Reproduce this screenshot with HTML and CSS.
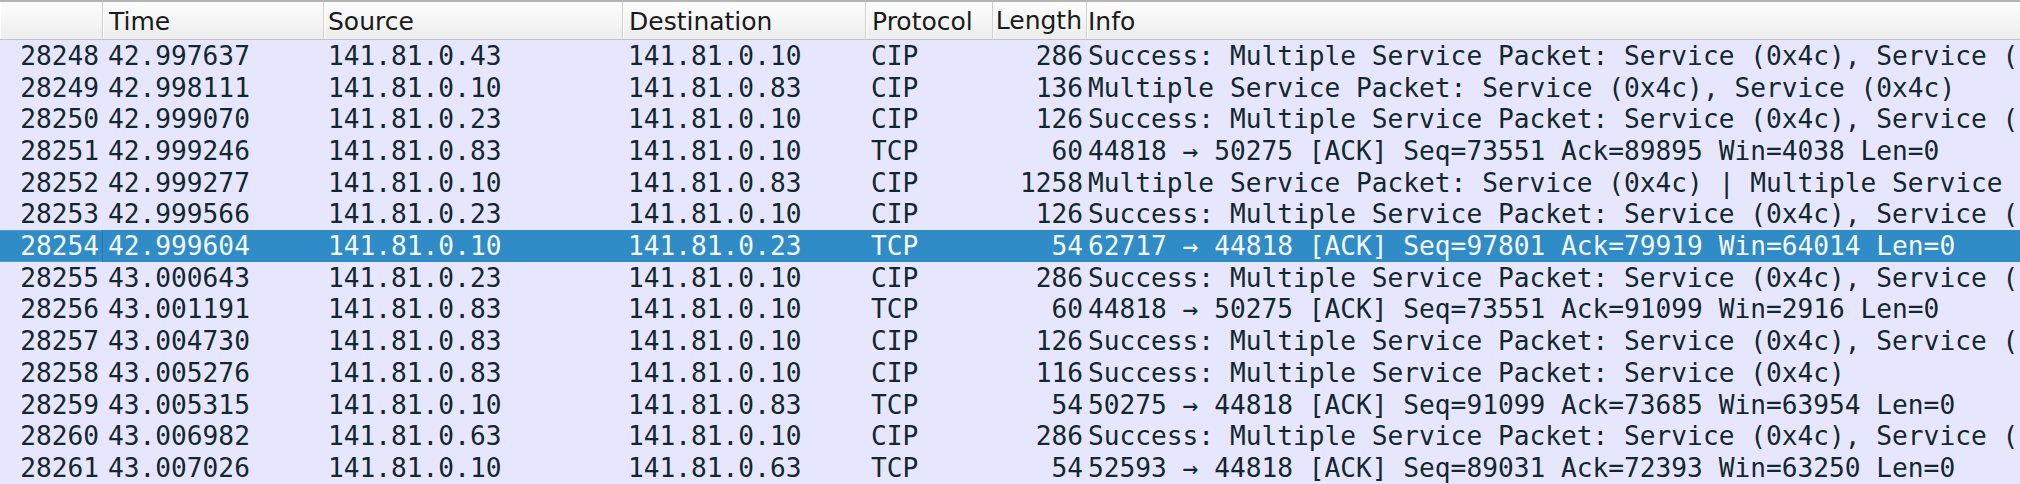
FILE: index.html
```html
<!DOCTYPE html>
<html>
<head>
<meta charset="utf-8">
<link rel="stylesheet" href="styles.css">
</head>
<body>
<div class="packets">
  <div class="head row">
    <div class="hc c-no"></div>
    <div class="hc c-time">Time</div>
    <div class="hc c-src">Source</div>
    <div class="hc c-dst">Destination</div>
    <div class="hc c-proto">Protocol</div>
    <div class="hc c-len">Length</div>
    <div class="hc c-info">Info</div>
  </div>
  <div class="row pkt"><div class="c c-no">28248</div><div class="c c-time">42.997637</div><div class="c c-src">141.81.0.43</div><div class="c c-dst">141.81.0.10</div><div class="c c-proto">CIP</div><div class="c c-len">286</div><div class="c c-info">Success: Multiple Service Packet: Service (0x4c), Service (</div></div>
  <div class="row pkt"><div class="c c-no">28249</div><div class="c c-time">42.998111</div><div class="c c-src">141.81.0.10</div><div class="c c-dst">141.81.0.83</div><div class="c c-proto">CIP</div><div class="c c-len">136</div><div class="c c-info">Multiple Service Packet: Service (0x4c), Service (0x4c)</div></div>
  <div class="row pkt"><div class="c c-no">28250</div><div class="c c-time">42.999070</div><div class="c c-src">141.81.0.23</div><div class="c c-dst">141.81.0.10</div><div class="c c-proto">CIP</div><div class="c c-len">126</div><div class="c c-info">Success: Multiple Service Packet: Service (0x4c), Service (</div></div>
  <div class="row pkt"><div class="c c-no">28251</div><div class="c c-time">42.999246</div><div class="c c-src">141.81.0.83</div><div class="c c-dst">141.81.0.10</div><div class="c c-proto">TCP</div><div class="c c-len">60</div><div class="c c-info">44818 → 50275 [ACK] Seq=73551 Ack=89895 Win=4038 Len=0</div></div>
  <div class="row pkt"><div class="c c-no">28252</div><div class="c c-time">42.999277</div><div class="c c-src">141.81.0.10</div><div class="c c-dst">141.81.0.83</div><div class="c c-proto">CIP</div><div class="c c-len">1258</div><div class="c c-info">Multiple Service Packet: Service (0x4c) | Multiple Service</div></div>
  <div class="row pkt"><div class="c c-no">28253</div><div class="c c-time">42.999566</div><div class="c c-src">141.81.0.23</div><div class="c c-dst">141.81.0.10</div><div class="c c-proto">CIP</div><div class="c c-len">126</div><div class="c c-info">Success: Multiple Service Packet: Service (0x4c), Service (</div></div>
  <div class="row pkt selected"><div class="c c-no focus">28254</div><div class="c c-time">42.999604</div><div class="c c-src">141.81.0.10</div><div class="c c-dst">141.81.0.23</div><div class="c c-proto">TCP</div><div class="c c-len">54</div><div class="c c-info">62717 → 44818 [ACK] Seq=97801 Ack=79919 Win=64014 Len=0</div></div>
  <div class="row pkt"><div class="c c-no">28255</div><div class="c c-time">43.000643</div><div class="c c-src">141.81.0.23</div><div class="c c-dst">141.81.0.10</div><div class="c c-proto">CIP</div><div class="c c-len">286</div><div class="c c-info">Success: Multiple Service Packet: Service (0x4c), Service (</div></div>
  <div class="row pkt"><div class="c c-no">28256</div><div class="c c-time">43.001191</div><div class="c c-src">141.81.0.83</div><div class="c c-dst">141.81.0.10</div><div class="c c-proto">TCP</div><div class="c c-len">60</div><div class="c c-info">44818 → 50275 [ACK] Seq=73551 Ack=91099 Win=2916 Len=0</div></div>
  <div class="row pkt"><div class="c c-no">28257</div><div class="c c-time">43.004730</div><div class="c c-src">141.81.0.83</div><div class="c c-dst">141.81.0.10</div><div class="c c-proto">CIP</div><div class="c c-len">126</div><div class="c c-info">Success: Multiple Service Packet: Service (0x4c), Service (</div></div>
  <div class="row pkt"><div class="c c-no">28258</div><div class="c c-time">43.005276</div><div class="c c-src">141.81.0.83</div><div class="c c-dst">141.81.0.10</div><div class="c c-proto">CIP</div><div class="c c-len">116</div><div class="c c-info">Success: Multiple Service Packet: Service (0x4c)</div></div>
  <div class="row pkt"><div class="c c-no">28259</div><div class="c c-time">43.005315</div><div class="c c-src">141.81.0.10</div><div class="c c-dst">141.81.0.83</div><div class="c c-proto">TCP</div><div class="c c-len">54</div><div class="c c-info">50275 → 44818 [ACK] Seq=91099 Ack=73685 Win=63954 Len=0</div></div>
  <div class="row pkt"><div class="c c-no">28260</div><div class="c c-time">43.006982</div><div class="c c-src">141.81.0.63</div><div class="c c-dst">141.81.0.10</div><div class="c c-proto">CIP</div><div class="c c-len">286</div><div class="c c-info">Success: Multiple Service Packet: Service (0x4c), Service (</div></div>
  <div class="row pkt"><div class="c c-no">28261</div><div class="c c-time">43.007026</div><div class="c c-src">141.81.0.10</div><div class="c c-dst">141.81.0.63</div><div class="c c-proto">TCP</div><div class="c c-len">54</div><div class="c c-info">52593 → 44818 [ACK] Seq=89031 Ack=72393 Win=63250 Len=0</div></div>
</div>
</body>
</html>
```
FILE: styles.css
```css
html, body {
  margin: 0;
  padding: 0;
  background: #e7e6ff;
}
.packets {
  width: 2020px;
  height: 484px;
  overflow: hidden;
  background: #e7e6ff;
}
.row {
  display: grid;
  grid-template-columns: 103px 221px 299px 243px 127px 94px 933px;
}
.head {
  height: 40px;
  box-sizing: border-box;
  border-top: 2px solid #b4b4b4;
  border-bottom: 1px solid #c4c4c4;
  background: linear-gradient(#fdfdfd, #ededed);
  font-family: "DejaVu Sans", sans-serif;
  font-size: 25px;
  color: #1a1a1a;
}
.hc {
  display: flex;
  align-items: center;
  padding-left: 6px;
  padding-top: 2px;
  border-right: 1px solid #d0d0d0;
  box-shadow: inset 1px 0 0 #ffffff;
  white-space: nowrap;
  overflow: hidden;
}
.hc.c-len { padding-left: 4px; }
.hc.c-info { padding-left: 1px; border-right: none; }
.pkt {
  height: 31.714px;
  font-family: "DejaVu Sans Mono", monospace;
  font-size: 26.2px;
  color: #12272e;
}
.c {
  display: flex;
  align-items: center;
  padding: 0 5px;
  white-space: nowrap;
  overflow: hidden;
  box-sizing: border-box;
}
.c-no, .c-len {
  justify-content: flex-end;
  padding: 0 4px 0 0;
}
.c-info { padding-left: 1px; padding-right: 0; }
.c-src { padding-left: 4px; }
.selected {
  background: #308cc6;
  color: #f4f8fc;
}
.focus {
  box-shadow: inset -1px 0 0 #2a78ab, inset 0 1px 0 #4a9ed2, inset 0 -1px 0 #4a9ed2;
}
```
